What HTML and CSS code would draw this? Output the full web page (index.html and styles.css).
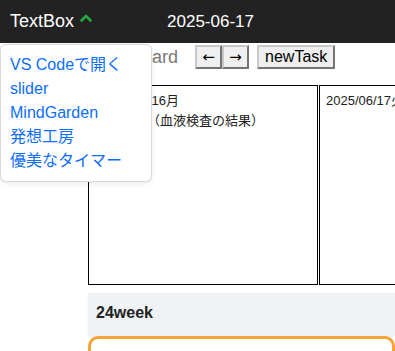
FILE: index.html
```html
<!DOCTYPE html>
<html lang="ja">
<head>
    <meta charset="UTF-8">
    <meta name="viewport" content="width=device-width, initial-scale=1.0">
    <title>TextBox</title>
    <link rel="stylesheet" href="styles.css">
</head>
<body>

<header class="topbar">
    <span class="brand">TextBox</span>
    <svg class="caret" width="12" height="8" viewBox="0 0 12 8">
        <path d="M1.5 6.5 L6 2 L10.5 6.5" fill="none" stroke="#28a745" stroke-width="2.6" stroke-linecap="round" stroke-linejoin="round"/>
    </svg>
    <span class="today">2025-06-17</span>
</header>

<nav class="menu">
    <a href="#">VS Codeで開く</a>
    <a href="#">slider</a>
    <a href="#">MindGarden</a>
    <a href="#">発想工房</a>
    <a href="#">優美なタイマー</a>
</nav>

<main class="board">
    <div class="toolbar">
        <h2 class="title">Dashboard</h2>
        <div class="nav">
            <button class="arrow">←</button><button class="arrow">→</button>
        </div>
        <button>newTask</button>
    </div>

    <div class="days">
        <div class="day">
            <div class="date first">2025/06/16月</div>
            <div>健康診断（血液検査の結果）</div>
        </div>
        <div class="day">
            <div class="date">2025/06/17火</div>
        </div>
    </div>

    <section class="week">
        <div class="week-head">24week</div>
        <div class="task"></div>
    </section>
</main>

</body>
</html>
```

FILE: styles.css
```css
body {
    font-family: 'Liberation Sans', 'Noto Sans CJK JP', sans-serif;
    background-color: #fff;
    margin: 0;
    overflow: hidden;
}
.topbar {
    display: flex;
    align-items: center;
    height: 43px;
    padding-left: 10px;
    background-color: #222;
    color: #fff;
}
.topbar .brand {
    font-size: 18px;
}
.topbar .caret {
    margin-left: 6px;
    margin-top: -7px;
}
.topbar .today {
    margin-left: 75px;
    font-size: 17px;
}
.menu {
    position: absolute;
    top: 44px;
    left: 0;
    width: 152px;
    box-sizing: border-box;
    padding: 8px 0;
    background-color: #fff;
    border: 1px solid rgba(0, 0, 0, 0.15);
    border-radius: 6px;
    box-shadow: 0 2px 6px rgba(0, 0, 0, 0.08);
}
.menu a {
    display: block;
    padding: 0 9px;
    line-height: 24px;
    font-size: 16px;
    color: #0d6efd;
    text-decoration: none;
}
.board {
    padding-left: 88px;
}
.toolbar {
    display: flex;
    align-items: center;
    height: 26px;
    margin-top: 1px;
}
.toolbar .title {
    margin: 0 17px 0 2px;
    font-size: 18px;
    font-weight: normal;
    color: #777;
}
.toolbar .nav {
    display: flex;
    margin-right: 8px;
}
.toolbar button {
    font-family: inherit;
    font-size: 16px;
    padding: 1px 6px;
    height: 24px;
    background-color: #efefef;
    border: 2px outset #c8c8c8;
    color: #000;
}
.toolbar button.arrow {
    font-family: 'DejaVu Sans', sans-serif;
    font-size: 15px;
    width: 27px;
    padding: 0;
}
.days {
    display: flex;
    gap: 1px;
    margin-top: 15px;
}
.day {
    flex-shrink: 0;
    width: 230px;
    height: 200px;
    box-sizing: border-box;
    padding: 5px 6px;
    border: 1px solid #000;
    font-size: 13px;
    line-height: 20px;
    color: #222;
}
.day .date {
    white-space: nowrap;
}
.day .date.first {
    padding-left: 6px;
}
.week {
    margin-top: 8px;
}
.week-head {
    height: 43px;
    line-height: 39px;
    padding: 0 8px;
    background-color: #eff3f6;
    font-size: 16px;
    font-weight: bold;
    color: #222;
    box-shadow: 0 1px 3px rgba(0, 0, 0, 0.08);
}
.task {
    height: 60px;
    border: 3px solid #f9a235;
    border-radius: 10px;
}
```
